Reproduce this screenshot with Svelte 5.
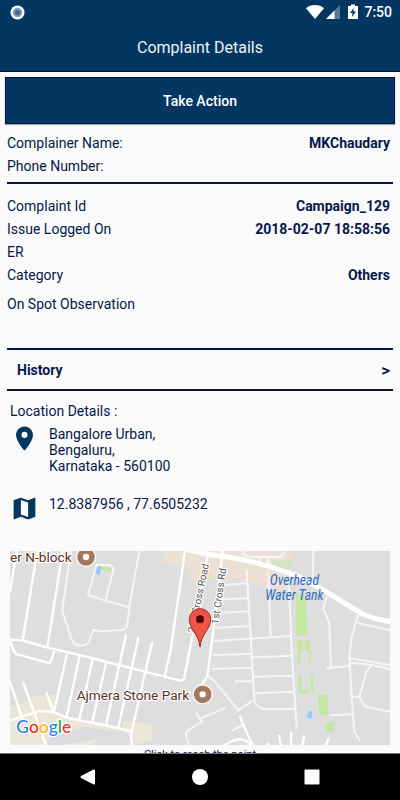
<script>
  const reporter = [
    { label: 'Complainer Name:', value: 'MKChaudary' },
    { label: 'Phone Number:', value: '' }
  ];
  const complaint = [
    { label: 'Complaint Id', value: 'Campaign_129' },
    { label: 'Issue Logged On', value: '2018-02-07 18:58:56' },
    { label: 'ER', value: '' },
    { label: 'Category', value: 'Others' }
  ];
  const address = ['Bangalore Urban,', 'Bengaluru,', 'Karnataka - 560100'];

  const streets = [
    'M50 33L30 155', 'M112 33L68 300', 'M188 33L142 322', 'M555 33L512 330L495 405',
    'M30 298L68 302L142 322L270 353L355 375L435 395L540 422Q550 422 553 412L575 300',
    'M30 298L40 330Q44 340 52 343L150 370L162 335',
    'M200 345L162 515', 'M238 350L200 530', 'M277 360L238 538', 'M318 370L277 545',
    'M378 285L318 555', 'M415 295L355 562', 'M456 308L395 575Q390 590 397 615',
    'M30 542L118 513L160 516L200 533L320 557L390 573',
    'M30 425L65 530', 'M70 428L138 615', 'M140 460L160 516',
    'M622 50L600 190L575 300', 'M668 35L640 270L622 410L600 440',
    'M720 530L757 615', 'M675 615Q700 598 720 598Q745 600 750 615',
    'M837 588L843 615', 'M873 578V615', 'M912 590L907 615', 'M985 595L978 615', 'M803 610L806 615'
  ];
  const lanes = [
    'M212 33L187 213L212 290Q220 316 240 317Q262 317 267 303L280 270L305 274L362 270Q378 268 381 258L388 200L418 33',
    'M290 75L264 165L316 182L388 202', 'M290 75L325 75Q342 78 340 90L316 182',
    'M740 92L752 290L763 480Q764 492 776 500L790 508L882 507', 'M805 100L812 290', 'M867 140L875 330L890 565',
    'M675 135L740 130', 'M665 178L742 175', 'M662 218L748 214', 'M650 263L750 258', 'M645 303L870 288',
    'M640 345L750 342', 'M758 352L875 347', 'M638 387L752 383', 'M760 410L875 407', 'M707 424H755', 'M765 460L880 455',
    'M940 33L938 115', 'M980 170L970 205L988 250L993 380', 'M982 384L1050 378',
    'M1075 225L1055 290L1048 350L1055 470L1063 575L1078 600', 'M1075 250L1170 270',
    'M1050 355L1170 375', 'M1050 368L1115 375L1170 388',
    'M1115 375L1100 395L1078 470L1095 500L1170 515', 'M1055 470H1078', 'M995 526L1055 523',
    'M625 410L642 422L715 511L755 484', 'M600 535L675 505', 'M698 570L730 555',
    'M590 520L605 545L570 567Q555 577 558 590L567 615',
    'M730 33V42L745 50L840 52L853 40', 'M780 52V70', 'M805 52V75'
  ];
</script>

<div class="screen">
  <header>
    <div class="status">
      <svg class="record" viewBox="0 0 16 16" aria-hidden="true">
        <circle cx="8" cy="8" r="7.5" fill="#fff" />
        <circle cx="8" cy="8" r="5" fill="#7f9fba" />
        <circle cx="8" cy="8" r="3" fill="#426d93" />
      </svg>
      <div class="indicators">
        <svg width="18" height="16" viewBox="0 0 18 16" aria-hidden="true">
          <path d="M0 4.200Q3.500 1 9 1T18 4.200L9 15Z" fill="#fff" />
        </svg>
        <svg width="14" height="16" viewBox="0 0 14 16" aria-hidden="true">
          <path d="M14 1V15H0Z" fill="#58799a" />
          <path d="M8.500 6.500V15H0Z" fill="#fff" />
        </svg>
        <svg class="battery" width="10" height="16" viewBox="0 0 10 16" aria-hidden="true">
          <path d="M0 2H3V0.500H7V2H10V15H0Z" fill="#fff" />
          <path d="M5.800 4L2 9H4.500L4 13L8 7.500H5.400Z" fill="#033660" />
        </svg>
        <span>7:50</span>
      </div>
    </div>
    <h1>Complaint Details</h1>
  </header>

  <main>
    <button class="action" type="button">Take Action</button>

    <dl class="group">
      {#each reporter as row}
        <div class="row"><dt>{row.label}</dt><dd>{row.value}</dd></div>
      {/each}
    </dl>

    <section class="details">
      <dl>
        {#each complaint as row}
          <div class="row"><dt>{row.label}</dt><dd>{row.value}</dd></div>
        {/each}
      </dl>
      <p>On Spot Observation</p>
    </section>

    <button class="history" type="button"><span>History</span><span class="chevron">&gt;</span></button>

    <section class="location">
      <h2>Location Details :</h2>
      <div class="place">
        <svg viewBox="0 0 24 24" aria-hidden="true">
          <path d="M12 2C8.130 2 5 5.130 5 9c0 5.250 7 13 7 13s7-7.750 7-13c0-3.870-3.130-7-7-7zm0 9.500a2.500 2.500 0 0 1 0-5 2.500 2.500 0 0 1 0 5z" />
        </svg>
        <address>{#each address as line}<span>{line}</span>{/each}</address>
      </div>
      <div class="place coords">
        <svg viewBox="0 0 24 24" aria-hidden="true">
          <path d="M20.500 3l-.160.030L15 5.100 9 3 3.360 4.900c-.210.070-.360.250-.360.480V20.500c0 .280.220.500.500.500l.160-.030L9 18.900l6 2.100 5.640-1.900c.210-.070.360-.250.360-.480V3.500c0-.280-.220-.500-.500-.500zM15 19l-6-2.110V5l6 2.110V19z" />
        </svg>
        <span>12.8387956 , 77.6505232</span>
      </div>

      <svg class="map" viewBox="30 33 1140 582" role="img" aria-label="Map of the complaint location">
        <rect x="30" y="33" width="1140" height="582" fill="#dedede" />
        <path fill="#ebe0d3" d="M490 33H860L882 50L872 95L867 150L800 142L675 108L600 123L565 120L570 85L485 68Z" />
        <path fill="#d4e3c8" d="M818 62L875 58L880 70L868 90L815 82Z" />
        <path fill="#ebe7d8" d="M30 500L62 492L100 468L166 465L162 512L205 535L365 562L360 578L290 600L275 615H30ZM370 543L456 552V602L405 613L385 580L365 572Z" />
        <path fill="#dcdce0" d="M150 590L260 560L365 580L290 597L180 615H140Z" />
        <g fill="#c5e6a0">
          <path d="M306 79L336 84L331 97L306 90Z" />
          <path d="M887 165Q900 158 916 164L921 282Q905 292 888 284ZM892 300H907L910 330H892ZM913 300H927L930 330H916ZM893 330H907L899 342V356L908 369H893ZM920 330H933V369H921L929 357V342ZM893 405H903L907 449H925V460H898ZM930 402H938L942 456H933ZM955 465L982 463L984 524H956ZM975 548L1002 545V575L980 573Z" />
        </g>
        <path fill="#9ac7fa" d="M290 78L306 79L299 105L285 102ZM925 514H936V536H925L920 527Z" />
        <g fill="none" stroke="#f6f6f6" stroke-width="6" stroke-linejoin="round" stroke-linecap="round">
          {#each lanes as d}<path {d} />{/each}
        </g>
        <g fill="none" stroke="#fff" stroke-width="7" stroke-linejoin="round" stroke-linecap="round">
          {#each streets as d}<path {d} />{/each}
          <path stroke-width="15" d="M565 30L600 38L735 60L810 80L885 105L970 150L1075 215Q1110 237 1175 245" />
        </g>
        <g class="road">
          <text transform="translate(583 280) rotate(-78)">2nd Cross Road</text>
          <text transform="translate(655 254) rotate(-82)">1st Cross Rd</text>
        </g>
        <g class="poi">
          <text x="30" y="66">er N-block</text>
          <text x="230" y="480">Ajmera Stone Park</text>
        </g>
        <g class="water" text-anchor="middle">
          <text x="883" y="134">Overhead</text>
          <text x="883" y="179">Water Tank</text>
        </g>
        <g fill="#fff" stroke="#a27860" stroke-width="17">
          <circle cx="258" cy="51" r="29" stroke="#fff" stroke-width="3" />
          <circle cx="258" cy="51" r="18" />
          <circle cx="608" cy="463" r="29" stroke="#fff" stroke-width="3" />
          <circle cx="608" cy="463" r="18" />
        </g>
        <path d="M600 321C596 280 568 268 568 238A32 32 0 0 1 632 238C632 268 604 280 600 321Z" fill="#f25349" stroke="#a5261f" stroke-width="3" />
        <circle cx="600" cy="238" r="12" fill="#4c0906" />
        <text class="google" x="49" y="579"><tspan fill="#2d7df0">G</tspan><tspan fill="#ea2e22">o</tspan><tspan fill="#fbb305">o</tspan><tspan fill="#2d7df0">g</tspan><tspan fill="#229a48">l</tspan><tspan fill="#ea2e22">e</tspan></text>
      </svg>
      <a href="#map">Click to reach the point</a>
    </section>
  </main>

  <nav aria-label="System navigation">
    <button type="button" aria-label="Back">
      <svg viewBox="0 0 16 16"><path d="M14 1.500V14.500L1.500 8Z" fill="#fff" stroke="#fff" stroke-width="2" stroke-linejoin="round" /></svg>
    </button>
    <button type="button" aria-label="Home">
      <svg viewBox="0 0 16 16"><circle cx="8" cy="8" r="8" fill="#fff" /></svg>
    </button>
    <button type="button" aria-label="Recent apps">
      <svg viewBox="0 0 16 16"><rect x="0.500" y="0.500" width="15" height="15" rx="1" fill="#fff" /></svg>
    </button>
  </nav>
</div>

<style>
  .screen {
    display: flex;
    flex-direction: column;
    height: 100vh;
    background: #fafafa;
    color: #06194a;
    font-family: Roboto, sans-serif;
    font-size: 14px;
    line-height: 16px;
  }
  h1, h2, dl, dd, p {
    margin: 0;
    font-weight: 400;
  }
  button {
    border: 0;
    padding: 0;
    background: none;
    color: inherit;
    font: inherit;
    cursor: pointer;
  }
  header {
    flex: none;
    background: #033660;
    border-bottom: 1px solid #041040;
    color: #fff;
  }
  .status {
    display: flex;
    align-items: center;
    justify-content: space-between;
    height: 24px;
    padding: 0 8px 0 10px;
  }
  .record {
    width: 15px;
    height: 15px;
  }
  .indicators {
    display: flex;
    align-items: center;
    gap: 2px;
    font-weight: 500;
  }
  .battery {
    margin: 0 4px 0 6px;
  }
  h1 {
    padding-top: 1px;
    color: #eef2f6;
    font-size: 16px;
    line-height: 46px;
    text-align: center;
  }
  main {
    flex: 1;
    min-height: 0;
    overflow: hidden;
    padding: 5px 5px 0;
  }
  .action {
    display: block;
    width: 100%;
    height: 47px;
    border: 1px solid #041040;
    background: #033660;
    box-shadow: 0 1px 1px rgba(0, 0, 0, 0.3);
    color: #fff;
    font-weight: 500;
  }
  .group, .details, .history {
    margin: 0 2px;
    border-bottom: 2px solid #061443;
  }
  .group {
    padding: 8px 0 4px;
  }
  .details {
    padding: 11px 0 32px;
  }
  .details p {
    margin-top: 6px;
    line-height: 23px;
  }
  .row {
    display: flex;
    justify-content: space-between;
    padding-right: 3px;
    line-height: 23px;
  }
  dd {
    font-weight: 700;
  }
  .history {
    display: flex;
    justify-content: space-between;
    align-items: center;
    width: calc(100% - 4px);
    height: 41px;
    padding: 0 3px 0 10px;
    font-weight: 700;
  }
  .chevron {
    font-size: 17px;
  }
  .location {
    display: flex;
    flex-direction: column;
    padding: 12px 5px 0;
  }
  h2 {
    font-size: 14px;
    line-height: 16px;
  }
  .place {
    display: flex;
    gap: 10px;
    margin-top: 7px;
  }
  .place svg {
    width: 29px;
    height: 29px;
    margin-top: -2px;
    fill: #033660;
  }
  .coords {
    margin-top: 22px;
  }
  address {
    display: flex;
    flex-direction: column;
    font-style: normal;
  }
  .map {
    display: block;
    width: 100%;
    margin-top: 28px;
  }
  .map text {
    paint-order: stroke;
    stroke: #fff;
    stroke-width: 7px;
    stroke-linejoin: round;
  }
  .poi {
    fill: #5a3020;
    font-size: 41px;
  }
  .map .water text {
    fill: #2b6cc4;
    font-family: "Roboto Condensed", Roboto, sans-serif;
    font-size: 41px;
    font-style: italic;
    stroke: none;
  }
  .road {
    fill: #555;
    font-size: 30px;
  }
  .map .google {
    font-family: Lato, sans-serif;
    font-size: 52px;
    font-weight: 500;
  }
  a {
    align-self: center;
    margin-top: 4px;
    color: inherit;
    font-size: 11px;
    line-height: 12px;
    text-decoration: none;
  }
  nav {
    display: flex;
    flex: none;
    justify-content: center;
    gap: 64px;
    height: 47px;
    border-top: 1px solid #777;
    box-sizing: border-box;
    background: #000;
  }
  nav button {
    display: grid;
    place-items: center;
    width: 48px;
  }
  nav svg {
    width: 16px;
    height: 16px;
  }
</style>
